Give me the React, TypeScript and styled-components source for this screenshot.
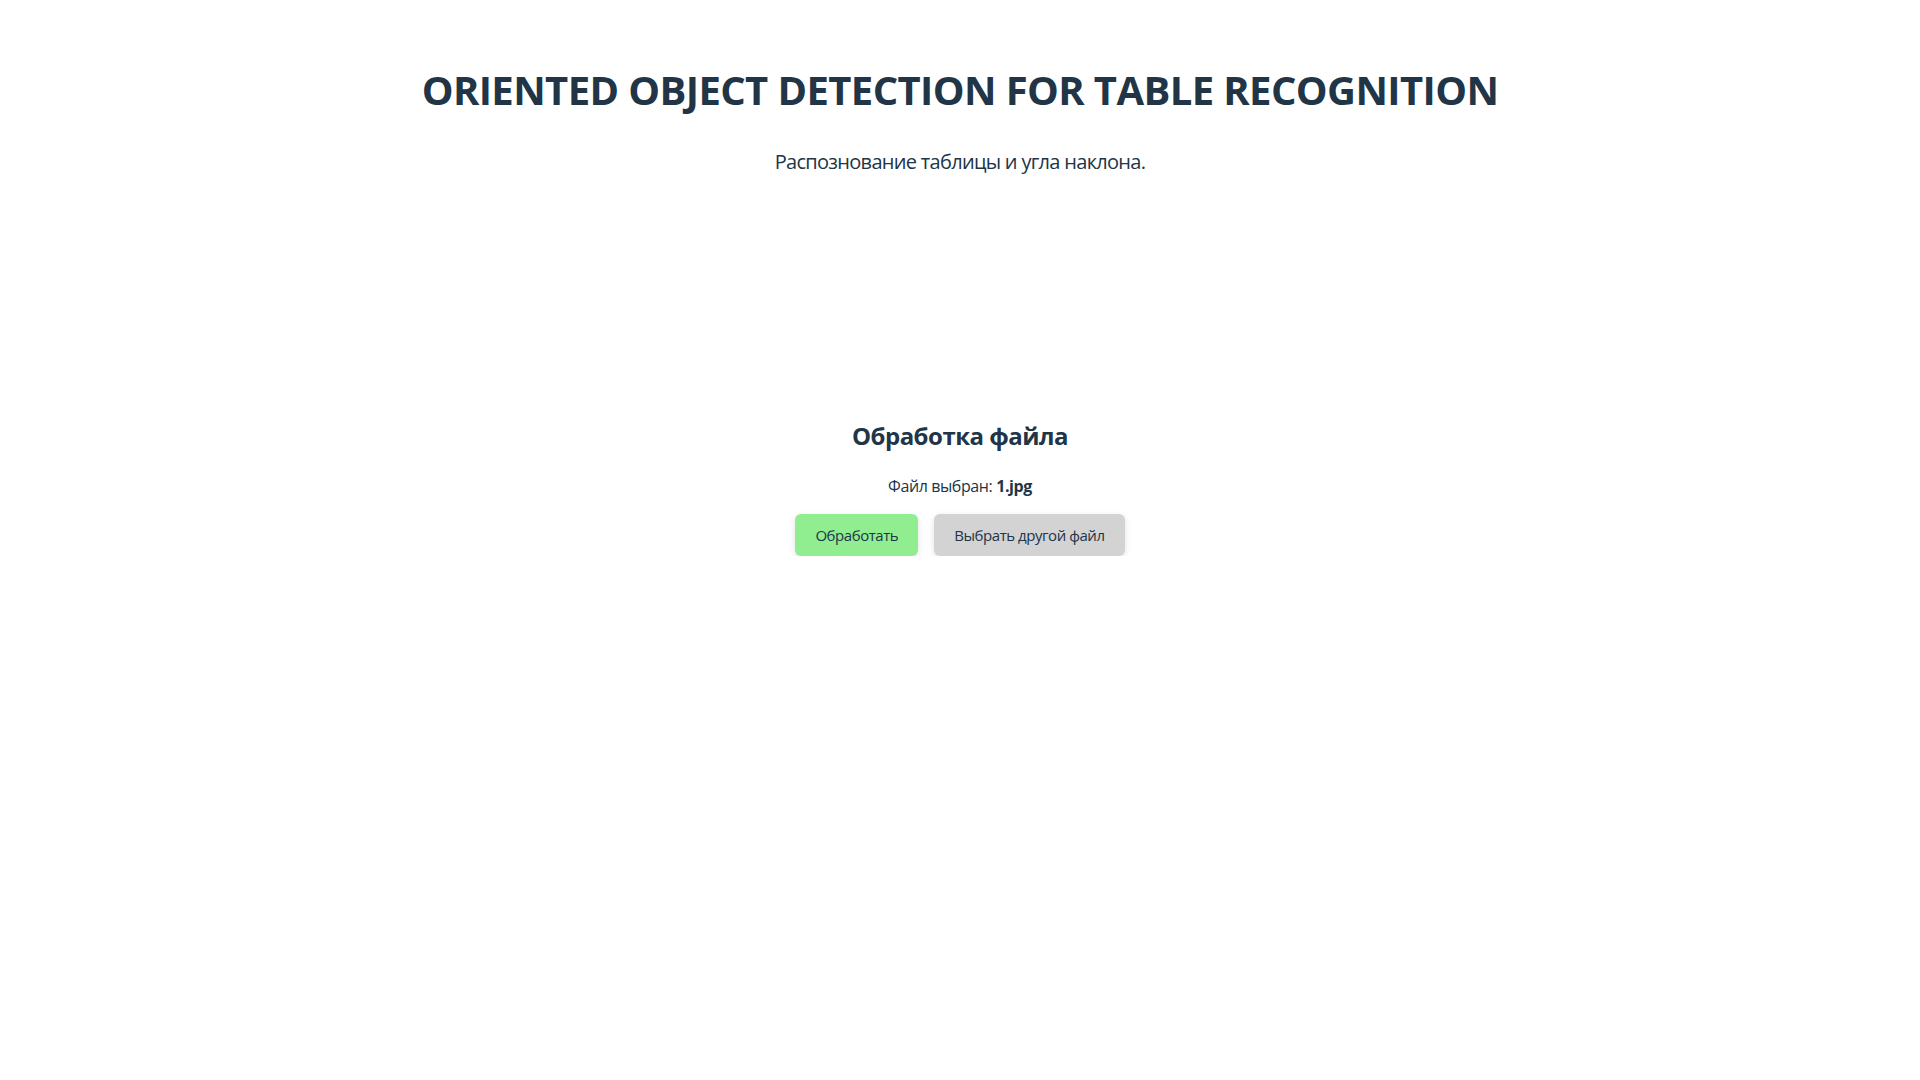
import React from "react";
import styled, { createGlobalStyle } from "styled-components";

const GlobalStyle = createGlobalStyle`
  html, body {
    margin: 0;
    padding: 0;
    background: #ffffff;
  }
  body {
    font-family: "Open Sans", "Noto Sans", "Liberation Sans", sans-serif;
    color: #213547;
  }
`;

const Page = styled.main`
  display: flex;
  flex-direction: column;
  align-items: center;
  padding-top: 66px;
  text-align: center;
`;

const Header = styled.header`
  display: flex;
  flex-direction: column;
  align-items: center;
  gap: 36px;
`;

const Title = styled.h1`
  margin: 0;
  font-size: 40px;
  line-height: 48px;
  font-weight: 700;
  letter-spacing: -0.6px;
  color: #213547;
`;

const Subtitle = styled.p`
  margin: 0;
  font-size: 20px;
  line-height: 24px;
  letter-spacing: -0.7px;
  color: #213547;
`;

const Section = styled.section`
  display: flex;
  flex-direction: column;
  align-items: center;
  margin-top: 247px;
`;

const SectionTitle = styled.h2`
  margin: 0;
  font-size: 24px;
  line-height: 30px;
  font-weight: 700;
  letter-spacing: -0.5px;
  color: #213547;
`;

const FileInfo = styled.p`
  margin: 25px 0 0;
  font-size: 16px;
  line-height: 20px;
  letter-spacing: -0.4px;
  color: #213547;

  strong {
    font-weight: 700;
  }
`;

const ButtonRow = styled.div`
  display: flex;
  gap: 16px;
  margin-top: 18px;
`;

const Button = styled.button<{ $variant: "primary" | "secondary" }>`
  font-family: inherit;
  font-size: 15px;
  line-height: 22px;
  letter-spacing: -0.45px;
  padding: 10px 20px;
  border: none;
  border-radius: 6px;
  cursor: pointer;
  color: #213547;
  background: ${(p) => (p.$variant === "primary" ? "#90ee90" : "#d3d3d3")};
  box-shadow: 0 2px 6px rgba(0, 0, 0, 0.12);
`;

export default function App() {
  return (
    <>
      <GlobalStyle />
      <Page>
        <Header>
          <Title>ORIENTED OBJECT DETECTION FOR TABLE RECOGNITION</Title>
          <Subtitle>Распознование таблицы и угла наклона.</Subtitle>
        </Header>
        <Section>
          <SectionTitle>Обработка файла</SectionTitle>
          <FileInfo>
            Файл выбран: <strong>1.jpg</strong>
          </FileInfo>
          <ButtonRow>
            <Button $variant="primary">Обработать</Button>
            <Button $variant="secondary">Выбрать другой файл</Button>
          </ButtonRow>
        </Section>
      </Page>
    </>
  );
}
